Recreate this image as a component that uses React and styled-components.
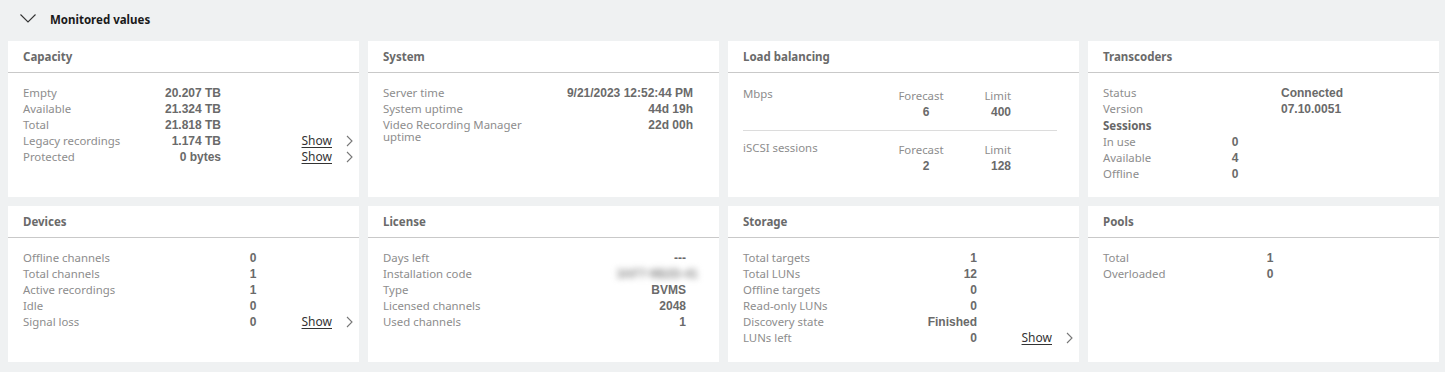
import React from 'react';
import styled, { createGlobalStyle } from 'styled-components';

const GlobalStyle = createGlobalStyle`
  body {
    margin: 0;
    background: #eff1f2;
    font-family: "Noto Sans", "Liberation Sans", sans-serif;
  }
`;

const capacity = [
  { label: 'Empty', value: '20.207 TB' },
  { label: 'Available', value: '21.324 TB' },
  { label: 'Total', value: '21.818 TB' },
  { label: 'Legacy recordings', value: '1.174 TB', show: true },
  { label: 'Protected', value: '0 bytes', show: true },
];

const system = [
  { label: 'Server time', value: '9/21/2023 12:52:44 PM' },
  { label: 'System uptime', value: '44d 19h' },
  { label: 'Video Recording Manager uptime', value: '22d 00h' },
];

const loadBalancing = [
  { label: 'Mbps', forecast: '6', limit: '400' },
  { label: 'iSCSI sessions', forecast: '2', limit: '128' },
];

const devices = [
  { label: 'Offline channels', value: '0' },
  { label: 'Total channels', value: '1' },
  { label: 'Active recordings', value: '1' },
  { label: 'Idle', value: '0' },
  { label: 'Signal loss', value: '0', show: true },
];

const license = [
  { label: 'Days left', value: '---' },
  { label: 'Installation code', value: '3AF7-9B2D-41', hidden: true },
  { label: 'Type', value: 'BVMS' },
  { label: 'Licensed channels', value: '2048' },
  { label: 'Used channels', value: '1' },
];

const storage = [
  { label: 'Total targets', value: '1' },
  { label: 'Total LUNs', value: '12' },
  { label: 'Offline targets', value: '0' },
  { label: 'Read-only LUNs', value: '0' },
  { label: 'Discovery state', value: 'Finished' },
  { label: 'LUNs left', value: '0', show: true },
];

const pools = [
  { label: 'Total', value: '1' },
  { label: 'Overloaded', value: '0' },
];

const Chevron = () => (
  <svg width="7" height="12" viewBox="0 0 7 12">
    <path d="M1 1l5 5-5 5" fill="none" stroke="#777" strokeWidth="1.1" />
  </svg>
);

const ShowLink = () => (
  <ShowCell>
    <ShowText href="#">Show</ShowText>
    <Chevron />
  </ShowCell>
);

const Rows = ({ items, cols, align }) =>
  items.map((r) => (
    <Row key={r.label} $cols={cols}>
      <Label>{r.label}</Label>
      <Value $align={align} $hidden={r.hidden}>{r.value}</Value>
      {cols.split(' ').length > 2 && (r.show ? <ShowLink /> : <span />)}
    </Row>
  ));

const Card = ({ title, children }) => (
  <CardBox>
    <CardHeader>{title}</CardHeader>
    <CardBody>{children}</CardBody>
  </CardBox>
);

const App = () => (
  <>
    <GlobalStyle />
    <Page>
      <SectionHeader>
        <svg width="16" height="9" viewBox="0 0 16 9">
          <path d="M0.5 0.5l7.5 7.5 7.5-7.5" fill="none" stroke="#333" strokeWidth="1.1" />
        </svg>
        <SectionTitle>Monitored values</SectionTitle>
      </SectionHeader>
      <Grid>
        <Card title="Capacity">
          <Rows items={capacity} cols="118px 80px 1fr" align="right" />
        </Card>
        <Card title="System">
          <Rows items={system} cols="150px 160px" align="right" />
        </Card>
        <Card title="Load balancing">
          {loadBalancing.map((s, i) => (
            <React.Fragment key={s.label}>
              {i > 0 && <Divider />}
              <StatRow>
                <Label>{s.label}</Label>
                <StatCol $align="center">
                  <StatHead>Forecast</StatHead>
                  <StatValue $pad>{s.forecast}</StatValue>
                </StatCol>
                <StatCol $align="flex-end">
                  <StatHead>Limit</StatHead>
                  <StatValue>{s.limit}</StatValue>
                </StatCol>
              </StatRow>
            </React.Fragment>
          ))}
        </Card>
        <Card title="Transcoders">
          <Rows
            items={[
              { label: 'Status', value: 'Connected' },
              { label: 'Version', value: '07.10.0051' },
            ]}
            cols="178px auto"
            align="left"
          />
          <SubHead>Sessions</SubHead>
          <Rows
            items={[
              { label: 'In use', value: '0' },
              { label: 'Available', value: '4' },
              { label: 'Offline', value: '0' },
            ]}
            cols="112px 40px"
            align="center"
          />
        </Card>
        <Card title="Devices">
          <Rows items={devices} cols="210px 40px 1fr" align="center" />
        </Card>
        <Card title="License">
          <Rows items={license} cols="150px 153px" align="right" />
        </Card>
        <Card title="Storage">
          <Rows items={storage} cols="174px 60px 1fr" align="right" />
        </Card>
        <Card title="Pools">
          <Rows items={pools} cols="147px 40px" align="center" />
        </Card>
      </Grid>
    </Page>
  </>
);

export default App;

const Page = styled.div`
  padding: 0 6px 10px 8px;
`;

const SectionHeader = styled.div`
  height: 38px;
  margin-bottom: 3px;
  display: flex;
  align-items: center;
  gap: 14px;
  padding-left: 12px;

  svg {
    margin-top: -1px;
  }
`;

const SectionTitle = styled.span`
  font-size: 11.5px;
  font-weight: 700;
  color: #1a1a1a;
`;

const Grid = styled.div`
  display: grid;
  grid-template-columns: repeat(4, 1fr);
  gap: 9px;
`;

const CardBox = styled.section`
  background: #fff;
  height: 156px;
  display: flex;
  flex-direction: column;
`;

const CardHeader = styled.div`
  height: 31px;
  flex-shrink: 0;
  display: flex;
  align-items: center;
  padding-left: 15px;
  border-bottom: 1px solid #c9c9c9;
  font-size: 11.5px;
  font-weight: 700;
  color: #6a6a6a;
`;

const CardBody = styled.div`
  padding: 11.5px 6px 0 15px;
`;

const Row = styled.div`
  display: grid;
  grid-template-columns: ${({ $cols }) => $cols};
  align-items: start;
  padding: 2px 0;
  line-height: 12px;
`;

const Label = styled.span`
  font-size: 11.4px;
  color: #8d8d8d;
`;

const Value = styled.span`
  font-family: "Liberation Sans", Arial, sans-serif;
  font-size: 12px;
  font-weight: 700;
  color: ${({ $hidden }) => ($hidden ? '#8a8a8a' : '#6a6a6a')};
  text-align: ${({ $align }) => $align};
  white-space: nowrap;
  filter: ${({ $hidden }) => ($hidden ? 'blur(3px)' : 'none')};
  margin-right: ${({ $hidden }) => ($hidden ? '-12px' : '0')};
`;

const ShowCell = styled.span`
  justify-self: end;
  display: flex;
  align-items: center;
  gap: 14px;
`;

const ShowText = styled.a`
  font-size: 12px;
  color: #333;
  text-decoration: underline;
  text-underline-offset: 2px;
`;

const SubHead = styled.div`
  font-size: 11.5px;
  font-weight: 700;
  color: #666;
  line-height: 12px;
  padding: 3px 0 2px;
`;

const StatRow = styled.div`
  display: grid;
  grid-template-columns: 148px 60px 60px;
  line-height: 16px;
  padding-top: 1px;

  & > ${() => StatCol} {
    padding-top: 2px;
  }
`;

const StatCol = styled.div`
  display: flex;
  flex-direction: column;
  align-items: ${({ $align }) => $align};
`;

const StatHead = styled.span`
  font-size: 11.4px;
  color: #8d8d8d;
`;

const StatValue = styled.span`
  font-family: "Liberation Sans", Arial, sans-serif;
  font-size: 12px;
  font-weight: 700;
  color: #6a6a6a;
  padding-left: ${({ $pad }) => ($pad ? '10px' : '0')};
`;

const Divider = styled.hr`
  border: 0;
  border-top: 1px solid #dcdcdc;
  margin: 10px 16px 8px 0;
`;
